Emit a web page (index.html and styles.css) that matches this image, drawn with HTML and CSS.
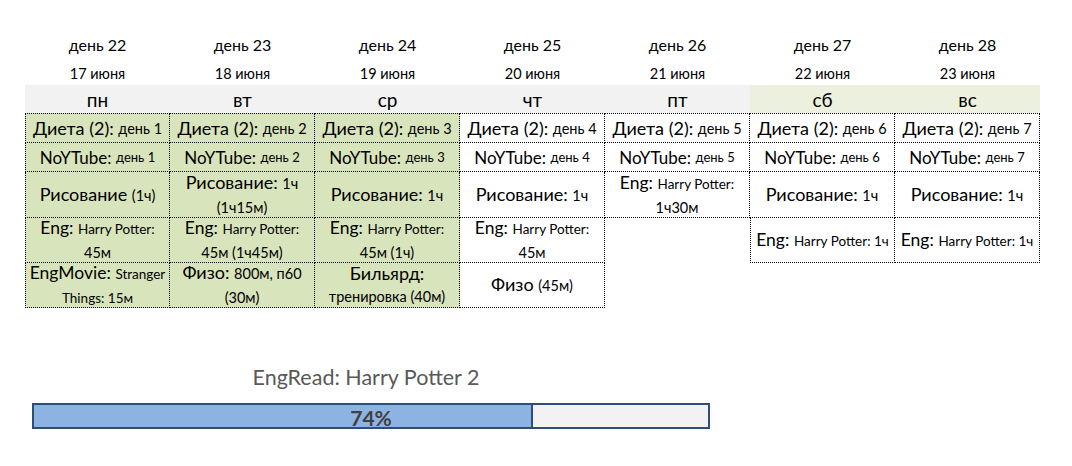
FILE: index.html
```html
<!DOCTYPE html>
<html lang="ru">
<head>
<meta charset="utf-8">
<title>Неделя</title>
<link rel="stylesheet" href="styles.css">
</head>
<body>
<div class="sheet">
  <div class="days">
    <div>день 22</div><div>день 23</div><div>день 24</div><div>день 25</div><div>день 26</div><div>день 27</div><div>день 28</div>
  </div>
  <div class="dates">
    <div>17 июня</div><div>18 июня</div><div>19 июня</div><div>20 июня</div><div>21 июня</div><div>22 июня</div><div>23 июня</div>
  </div>
  <div class="weekdays">
    <div>пн</div><div>вт</div><div>ср</div><div>чт</div><div>пт</div><div class="weekend">сб</div><div class="weekend">вс</div>
  </div>
  <div class="tasks">
    <!-- row 1 -->
    <div class="cell g first-row first-col">Диета (2):&nbsp;<span class="s">день 1</span></div>
    <div class="cell g first-row">Диета (2):&nbsp;<span class="s">день 2</span></div>
    <div class="cell g first-row">Диета (2):&nbsp;<span class="s">день 3</span></div>
    <div class="cell first-row">Диета (2):&nbsp;<span class="s">день 4</span></div>
    <div class="cell first-row">Диета (2):&nbsp;<span class="s">день 5</span></div>
    <div class="cell first-row">Диета (2):&nbsp;<span class="s">день 6</span></div>
    <div class="cell first-row">Диета (2):&nbsp;<span class="s">день 7</span></div>
    <!-- row 2 -->
    <div class="cell g first-col"><span class="m">NoYTube:</span>&nbsp;<span class="xs">день 1</span></div>
    <div class="cell g"><span class="m">NoYTube:</span>&nbsp;<span class="xs">день 2</span></div>
    <div class="cell g"><span class="m">NoYTube:</span>&nbsp;<span class="xs">день 3</span></div>
    <div class="cell"><span class="m">NoYTube:</span>&nbsp;<span class="xs">день 4</span></div>
    <div class="cell"><span class="m">NoYTube:</span>&nbsp;<span class="xs">день 5</span></div>
    <div class="cell"><span class="m">NoYTube:</span>&nbsp;<span class="xs">день 6</span></div>
    <div class="cell"><span class="m">NoYTube:</span>&nbsp;<span class="xs">день 7</span></div>
    <!-- row 3 -->
    <div class="cell g first-col"><p>Рисование <span class="s">(1ч)</span></p></div>
    <div class="cell g"><p>Рисование: <span class="s">1ч</span><br><span class="s">(1ч15м)</span></p></div>
    <div class="cell g"><p>Рисование: <span class="s">1ч</span></p></div>
    <div class="cell"><p>Рисование: <span class="s">1ч</span></p></div>
    <div class="cell"><p><span class="e">Eng:</span> <span class="l">Harry Potter:</span><br><span class="s">1ч30м</span></p></div>
    <div class="cell"><p>Рисование: <span class="s">1ч</span></p></div>
    <div class="cell"><p>Рисование: <span class="s">1ч</span></p></div>
    <!-- row 4 -->
    <div class="cell g first-col"><p><span class="e">Eng:</span> <span class="l">Harry Potter:</span><br><span class="s">45м</span></p></div>
    <div class="cell g"><p><span class="e">Eng:</span> <span class="l">Harry Potter:</span><br><span class="s">45м (1ч45м)</span></p></div>
    <div class="cell g"><p><span class="e">Eng:</span> <span class="l">Harry Potter:</span><br><span class="s">45м (1ч)</span></p></div>
    <div class="cell"><p><span class="e">Eng:</span> <span class="l">Harry Potter:</span><br><span class="s">45м</span></p></div>
    <div class="empty"></div>
    <div class="cell left"><p><span class="e">Eng:</span> <span class="l">Harry Potter: 1ч</span></p></div>
    <div class="cell"><p><span class="e">Eng:</span> <span class="l">Harry Potter: 1ч</span></p></div>
    <!-- row 5 -->
    <div class="cell g first-col"><p><span class="e">EngMovie:</span> <span class="l">Stranger</span><br><span class="l">Things: 15м</span></p></div>
    <div class="cell g"><p>Физо: <span class="s">800м, п60</span><br><span class="s">(30м)</span></p></div>
    <div class="cell g"><p>Бильярд:<br><span class="s">тренировка (40м)</span></p></div>
    <div class="cell"><p>Физо <span class="s">(45м)</span></p></div>
  </div>

  <div class="progress">
    <div class="progress-title">EngRead: Harry Potter 2</div>
    <div class="bar">
      <div class="fill" style="width: 74%"></div>
      <div class="bar-label">74%</div>
    </div>
  </div>
</div>
</body>
</html>
```
FILE: styles.css
```css
* { box-sizing: border-box; }
html, body { margin: 0; padding: 0; background: #ffffff; }
body {
  font-family: "Lato", "Liberation Sans", sans-serif;
  color: #000;
  width: 1072px;
  height: 466px;
  overflow: hidden;
}
.sheet {
  padding-top: 30px;
  padding-left: 25px;
}
.days, .dates, .weekdays, .tasks {
  display: grid;
  grid-template-columns: repeat(7, 145px);
  width: 1015px;
}
.days > div {
  height: 30px;
  line-height: 30px;
  text-align: center;
  font-size: 16px;
}
.dates > div {
  height: 25px;
  line-height: 28px;
  text-align: center;
  font-size: 14.5px;
}
.weekdays > div {
  height: 28px;
  line-height: 30px;
  text-align: center;
  font-size: 19px;
  background: #f2f2f2;
}
.weekdays > .weekend { background: #ebf1de; }

.tasks {
  grid-template-rows: 30px 29px 46px 45px 45px;
}
.cell {
  display: flex;
  align-items: center;
  justify-content: center;
  text-align: center;
  font-size: 18px;
  border-right: 1px dotted #000;
  border-bottom: 1px dotted #000;
  white-space: nowrap;
}
.cell p { margin: 0; line-height: 22px; }
.cell.first-row { border-top: 1px dotted #000; }
.cell.first-col, .cell.left { border-left: 1px dotted #000; }
.cell.g { background: #d8e4bc; }
.s { font-size: 14.5px; }
.l { font-size: 13.5px; }
.e { font-size: 17.5px; }
.m { font-size: 17px; }
.xs { font-size: 13px; }

.progress {
  margin-top: 56px;
  margin-left: 7px;
  width: 678px;
}
.progress-title {
  text-align: center;
  color: #595959;
  font-size: 21.5px;
  line-height: 26px;
  padding-right: 10px;
}
.bar {
  position: relative;
  margin-top: 13px;
  height: 26px;
  border: 2px solid #2b4f77;
  background: #f2f2f2;
}
.fill {
  height: 100%;
  background: #8db3e2;
  border-right: 2px solid #2b4f77;
}
.bar-label {
  position: absolute;
  inset: 0;
  padding-top: 2px;
  text-align: center;
  line-height: 22px;
  font-weight: bold;
  font-size: 21px;
  color: #404040;
}
```
